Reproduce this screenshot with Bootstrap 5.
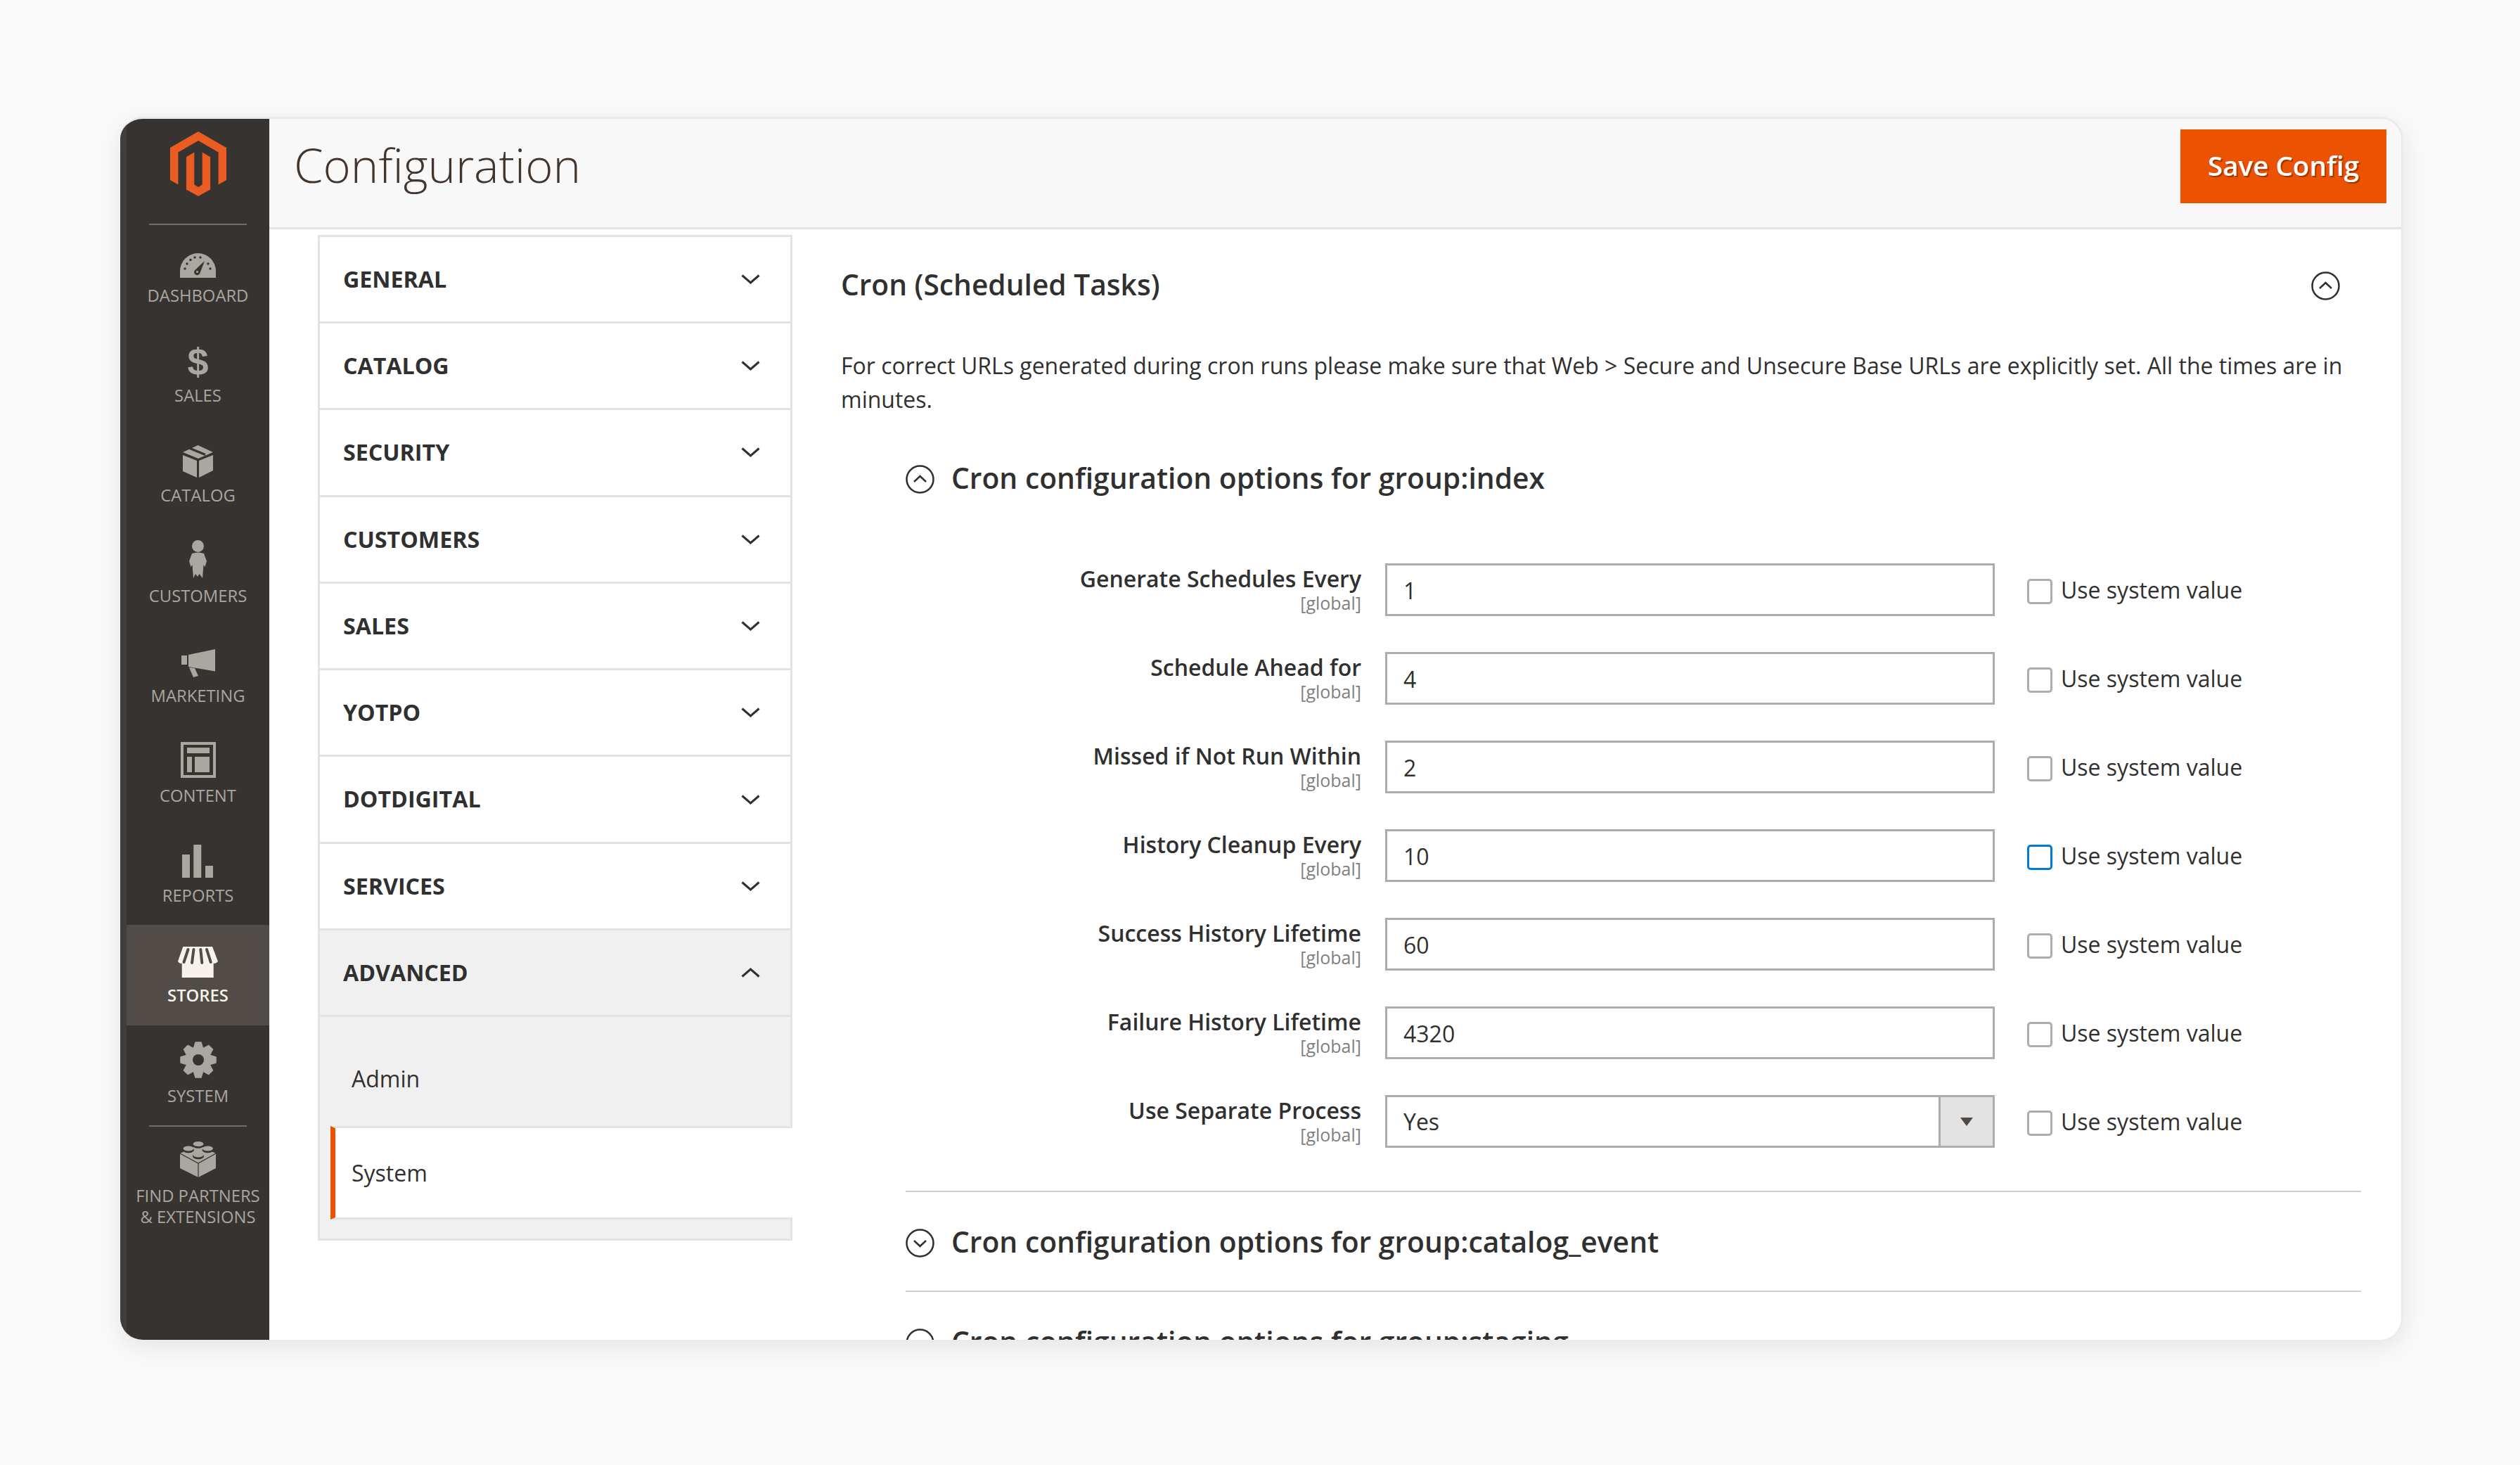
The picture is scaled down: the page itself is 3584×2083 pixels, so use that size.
<!DOCTYPE html>
<html lang="en"><head><meta charset="utf-8"><title>Configuration</title>
<link href="https://cdn.jsdelivr.net/npm/bootstrap@5.3.0/dist/css/bootstrap.min.css" rel="stylesheet">
<style>
html,body{height:100%}
body{background:#fafafa;overflow:hidden;font-family:"Open Sans",sans-serif;font-size:32px;color:#41362f}
.app-window{margin:166px 0 0 171px;width:3247px;height:1739px;border-radius:32px;overflow:hidden;background:#fff;box-shadow:0 10px 36px rgba(0,0,0,.09);border-top:3px solid #ebebeb;border-right:3px solid #ebebeb}
.side-bar{width:212px;flex:none;background:#373330;border-left:9px solid #3e3e3e;margin-top:-3px;padding-top:3px}
.logo-box{height:149px;padding-top:18px}
.side-sep{height:2px;background:#736d66;margin:0 32px}
.menu-entry{height:142.2px;color:#aaa6a0;text-align:center;font-size:23.8px;line-height:30px;text-transform:uppercase}
.menu-entry.is-on{background:#514c47;color:#f7f3eb;font-weight:600}
.menu-ico{height:75px}
.menu-ico svg{fill:currentColor;display:block}
.menu-txt{margin-top:10px}
.menu-lego .menu-ico{height:72px}
.menu-lego .menu-txt{margin-top:11px}
.dollar{font:700 54px/46px "Liberation Sans",sans-serif;margin-bottom:0}
.top-bar{height:157px;flex:none;background:#f8f8f8;border-bottom:3px solid #e3e3e3;padding:14px 21px 0 35px}
.page-name{font-size:67px;font-weight:300;line-height:1;margin:0 0 37px;color:#41362f}
.save-btn{width:293px;height:105px;background:#eb5202;border:0;border-radius:0;color:#fff;font-size:38.6px;font-weight:600;text-shadow:2px 2px 1px rgba(0,0,0,.35);margin-bottom:34px}
.nav-col{width:675px;flex:none;margin:8px 0 0 69px}
.tab-row{height:123.3px;background:#fff;border:solid #e3e3e3;border-width:0 3px 3px;padding:0 43px 0 33px;font-weight:700;font-size:32.2px;text-transform:uppercase;color:#303030}
.tab-row:first-child{height:126px;border-top:3px solid #e3e3e3}
.tab-row.is-open{background:#f0f0f0}
.sub-wrap{background:#f0f0f0;border:solid #e3e3e3;border-width:0 3px 3px;height:318px}
.sub-row{color:#303030;font-size:32px}
.sub-admin{height:155px;padding:66px 0 0 45px;line-height:44px}
.sub-sys{height:133px;margin:0 -3px 0 15px;background:#fff;border-left:7px solid #eb5202;border-top:3px solid #e3e3e3;border-bottom:3px solid #e3e3e3;padding-left:23px}
.main-col{padding:0 57px 0 69px;overflow:hidden}
.sec-head{height:157px}
.sec-name{font-size:40.7px;font-weight:600;margin:0;color:#303030}
.sec-fold{margin:4px 30px 0 0}
.sec-note{line-height:48px;margin:13px 0 47px;font-size:32px;color:#303030}
.grp-wrap{margin-left:92px}
.grp-head{height:80px;gap:24px}
.grp-ring{margin-top:4px;flex:none}
.grp-name{font-size:40.8px;font-weight:600;margin:0;color:#303030;white-space:nowrap}
.field-list{margin-top:82px;gap:51px}
.field-row{height:75px}
.field-lab{width:648px;flex:none;text-align:right;font-weight:600;line-height:44px;color:#303030;margin-top:-6px}
.field-lab small{display:block;font-size:25px;font-weight:400;color:#808080;line-height:28px;margin-top:-2px}
.field-box{width:867px;flex:none;margin-left:34px}
.field-box .form-control,.field-box .form-select{height:75px;border:3px solid #adadad;border-radius:0;font-size:32px;color:#303030;padding:1px 23px 0;background-image:none;box-shadow:none;line-height:1.4}
.sel-cap{width:80px;height:75px;flex:none;background:#e3e3e3;border:3px solid #adadad;border-left-width:3px;margin-left:-3px}
.sel-tri{width:0;height:0;border-left:9px solid transparent;border-right:9px solid transparent;border-top:12px solid #514943}
.use-sys{margin:2px 0 0 46px;padding:0;min-height:0;gap:12px;white-space:nowrap;color:#303030}
.use-sys .form-check-input{width:36px;height:36px;float:none;margin:2px 0 0;border:3px solid #adadad;border-radius:5px;box-shadow:none}
.use-sys .form-check-input.is-hot{border-color:#007bdb}
.use-sys .form-check-label{line-height:44px;margin-top:-2px}
.grp-line{height:2px;background:#cfcfcf;margin-top:61px}
.grp-alt{height:80px;gap:24px;margin-top:30px;margin-bottom:30px}
.grp-alt + .grp-line{margin-top:0}
</style></head><body>
<div class="app-window d-flex">
<aside class="side-bar d-flex flex-column">
 <div class="logo-box d-flex justify-content-center">
  <svg width="80" height="92" viewBox="0 0 80 92"><path fill="#eb5c22" d="M40 0 80 23V69L68.6 75.6V29.6L40 13.1 11.4 29.6V75.6L0 69V23ZM22.9 36.2 34.3 29.6V75.6L40 79 45.7 75.6V29.6L57.1 36.2V82.4L40 92 22.9 82.4Z"/></svg>
 </div>
 <div class="side-sep"></div>
 <div class="menu-entry"><div class="menu-ico d-flex justify-content-center align-items-end">
  <svg width="51" height="35" viewBox="0 0 51 35"><path d="M0 35V25.500A25.500 25.500 0 0 1 51 25.500V35Z"/><g fill="#373330"><circle cx="7" cy="22" r="1.700"/><circle cx="10" cy="15" r="1.700"/><circle cx="15" cy="9.500" r="1.700"/><circle cx="21" cy="6" r="1.700"/><circle cx="29" cy="6" r="1.700"/><circle cx="40" cy="15" r="1.700"/><circle cx="43" cy="22" r="1.700"/><path d="M35 11 28.500 28A4.300 4.300 0 1 1 20.800 24.500Z"/></g><circle cx="24.500" cy="26.500" r="1.600"/></svg></div><div class="menu-txt">Dashboard</div></div>
 <div class="menu-entry"><div class="menu-ico d-flex justify-content-center align-items-end"><span class="dollar">$</span></div><div class="menu-txt">Sales</div></div>
 <div class="menu-entry"><div class="menu-ico d-flex justify-content-center align-items-end">
  <svg width="43" height="46" viewBox="0 0 43 46"><path d="M21.5 0 43 10 22 19 0 10Z"/><path d="M0 14 20 22V46L0 37ZM23 22 43 14V36L23 46Z"/><path d="M10 4.5 32 13.5" stroke="#373330" stroke-width="3.5"/></svg></div><div class="menu-txt">Catalog</div></div>
 <div class="menu-entry"><div class="menu-ico d-flex justify-content-center align-items-end">
  <svg width="25" height="54" viewBox="0 0 25 54"><ellipse cx="12.5" cy="8.5" rx="8.5" ry="8.5"/><path d="M4 19Q12.500 16 21 19L25 30 22.500 38 20.500 35 19 54 14.500 48 12 52 9 48 6 54 4.500 35 2.500 38 0 30Z"/></svg></div><div class="menu-txt">Customers</div></div>
 <div class="menu-entry"><div class="menu-ico d-flex justify-content-center align-items-end">
  <svg width="48" height="41" viewBox="0 0 48 41"><path d="M10 8 48 0V31.500L10 25ZM0 9H8V22H0ZM11 26 19 27 24 38 17 40Z"/></svg></div><div class="menu-txt">Marketing</div></div>
 <div class="menu-entry"><div class="menu-ico d-flex justify-content-center align-items-end">
  <svg width="50" height="51" viewBox="0 0 50 51"><path fill-rule="evenodd" d="M0 0H50V51H0ZM4 4V47H46V4Z"/><path d="M9 8H41V16H9ZM9 21H16V43H9ZM20 21H41V43H20Z"/></svg></div><div class="menu-txt">Content</div></div>
 <div class="menu-entry"><div class="menu-ico d-flex justify-content-center align-items-end">
  <svg width="45" height="47" viewBox="0 0 45 47"><path d="M0 14H11V47H0ZM16.300 0H27.300V47H16.300ZM33 30H44V47H33Z"/></svg></div><div class="menu-txt">Reports</div></div>
 <div class="menu-entry is-on"><div class="menu-ico d-flex justify-content-center align-items-end">
  <svg width="57" height="44" viewBox="0 0 57 44"><path d="M7.300 0H49L57 21Q53.500 25 50.700 23.500V44H5.700V23.500Q3 25 0 21Z"/><path d="M14.500 4 8.500 22M22.500 4 20 23M32.300 4 34.300 23M41 4 46.700 22" stroke="#514c47" stroke-width="4" stroke-linecap="round" fill="none"/></svg></div><div class="menu-txt">Stores</div></div>
 <div class="menu-entry"><div class="menu-ico d-flex justify-content-center align-items-end">
  <svg width="52" height="52" viewBox="0 0 52 52"><g stroke="currentColor" stroke-width="1.500" stroke-linejoin="round"><path d="M22 1h8l3 10H19z"/><path transform="rotate(45 26 26)" d="M22 1h8l3 10H19z"/><path transform="rotate(90 26 26)" d="M22 1h8l3 10H19z"/><path transform="rotate(135 26 26)" d="M22 1h8l3 10H19z"/><path transform="rotate(180 26 26)" d="M22 1h8l3 10H19z"/><path transform="rotate(225 26 26)" d="M22 1h8l3 10H19z"/><path transform="rotate(270 26 26)" d="M22 1h8l3 10H19z"/><path transform="rotate(315 26 26)" d="M22 1h8l3 10H19z"/></g><circle cx="26" cy="26" r="18"/><circle cx="26" cy="26" r="8" fill="#373330"/></svg></div><div class="menu-txt">System</div></div>
 <div class="side-sep"></div>
 <div class="menu-entry menu-lego"><div class="menu-ico d-flex justify-content-center align-items-end">
  <svg width="51" height="51" viewBox="0 0 51 51"><path d="M0 17 26 5 51 17V38L26 51 0 38Z"/><path d="M0 17 26 31 51 17M26 31V51" fill="none" stroke="#373330" stroke-width="1.200"/><g fill="#373330"><ellipse cx="26" cy="5.500" rx="8" ry="4.200"/><ellipse cx="12" cy="12" rx="8" ry="4.200"/><ellipse cx="39.500" cy="12" rx="8" ry="4.200"/><ellipse cx="26" cy="21" rx="8" ry="4.200"/></g><ellipse cx="26" cy="3.500" rx="7.500" ry="3.500"/><ellipse cx="12" cy="10" rx="7.500" ry="3.500"/><ellipse cx="39.500" cy="10" rx="7.500" ry="3.500"/><ellipse cx="26" cy="19" rx="7.500" ry="3.500"/></svg></div><div class="menu-txt">Find Partners<br>&amp; Extensions</div></div>
</aside>
<div class="flex-grow-1 d-flex flex-column" style="min-width:0">
 <header class="top-bar d-flex justify-content-between align-items-center">
  <h1 class="page-name">Configuration</h1>
  <button type="button" class="btn save-btn">Save Config</button>
 </header>
 <div class="d-flex flex-grow-1" style="min-height:0">
  <nav class="nav-col">
   <div class="tab-row d-flex justify-content-between align-items-center">General<svg width="27" height="14" viewBox="0 0 27 14"><path d="M1.500 1.500 13.500 12 25.500 1.500" fill="none" stroke="#303030" stroke-width="3"/></svg></div>
   <div class="tab-row d-flex justify-content-between align-items-center">Catalog<svg width="27" height="14" viewBox="0 0 27 14"><path d="M1.500 1.500 13.500 12 25.500 1.500" fill="none" stroke="#303030" stroke-width="3"/></svg></div>
   <div class="tab-row d-flex justify-content-between align-items-center">Security<svg width="27" height="14" viewBox="0 0 27 14"><path d="M1.500 1.500 13.500 12 25.500 1.500" fill="none" stroke="#303030" stroke-width="3"/></svg></div>
   <div class="tab-row d-flex justify-content-between align-items-center">Customers<svg width="27" height="14" viewBox="0 0 27 14"><path d="M1.500 1.500 13.500 12 25.500 1.500" fill="none" stroke="#303030" stroke-width="3"/></svg></div>
   <div class="tab-row d-flex justify-content-between align-items-center">Sales<svg width="27" height="14" viewBox="0 0 27 14"><path d="M1.500 1.500 13.500 12 25.500 1.500" fill="none" stroke="#303030" stroke-width="3"/></svg></div>
   <div class="tab-row d-flex justify-content-between align-items-center">Yotpo<svg width="27" height="14" viewBox="0 0 27 14"><path d="M1.500 1.500 13.500 12 25.500 1.500" fill="none" stroke="#303030" stroke-width="3"/></svg></div>
   <div class="tab-row d-flex justify-content-between align-items-center">Dotdigital<svg width="27" height="14" viewBox="0 0 27 14"><path d="M1.500 1.500 13.500 12 25.500 1.500" fill="none" stroke="#303030" stroke-width="3"/></svg></div>
   <div class="tab-row d-flex justify-content-between align-items-center">Services<svg width="27" height="14" viewBox="0 0 27 14"><path d="M1.500 1.500 13.500 12 25.500 1.500" fill="none" stroke="#303030" stroke-width="3"/></svg></div>
   <div class="tab-row is-open d-flex justify-content-between align-items-center">Advanced<svg width="27" height="14" viewBox="0 0 27 14"><path d="M1.500 12.500 13.500 2 25.500 12.500" fill="none" stroke="#303030" stroke-width="3"/></svg></div>
   <div class="sub-wrap">
    <div class="sub-row sub-admin">Admin</div>
    <div class="sub-row sub-sys d-flex align-items-center">System</div>
   </div>
  </nav>
  <main class="main-col flex-grow-1">
   <div class="sec-head d-flex justify-content-between align-items-center">
    <h2 class="sec-name">Cron (Scheduled Tasks)</h2>
    <svg class="sec-fold" width="41" height="41" viewBox="0 0 41 41"><circle cx="20.500" cy="20.500" r="19" fill="none" stroke="#303030" stroke-width="2.500"/><path d="M12 24 20.500 16 29 24" fill="none" stroke="#303030" stroke-width="2.500"/></svg>
   </div>
   <p class="sec-note">For correct URLs generated during cron runs please make sure that Web &gt; Secure and Unsecure Base URLs are explicitly set. All the times are in minutes.</p>
   <div class="grp-wrap">
    <div class="grp-head d-flex align-items-center">
     <svg class="grp-ring" width="41" height="41" viewBox="0 0 41 41"><circle cx="20.500" cy="20.500" r="19" fill="none" stroke="#303030" stroke-width="2.500"/><path d="M12 24 20.500 16 29 24" fill="none" stroke="#303030" stroke-width="2.500"/></svg>
     <h3 class="grp-name">Cron configuration options for group:index</h3>
    </div>
    <div class="field-list d-flex flex-column">
     <div class="field-row d-flex align-items-center"><label class="field-lab">Generate Schedules Every<small>[global]</small></label><div class="field-box"><input class="form-control" value="1"></div><div class="use-sys form-check d-flex align-items-center"><input class="form-check-input" type="checkbox"><label class="form-check-label">Use system value</label></div></div>
     <div class="field-row d-flex align-items-center"><label class="field-lab">Schedule Ahead for<small>[global]</small></label><div class="field-box"><input class="form-control" value="4"></div><div class="use-sys form-check d-flex align-items-center"><input class="form-check-input" type="checkbox"><label class="form-check-label">Use system value</label></div></div>
     <div class="field-row d-flex align-items-center"><label class="field-lab">Missed if Not Run Within<small>[global]</small></label><div class="field-box"><input class="form-control" value="2"></div><div class="use-sys form-check d-flex align-items-center"><input class="form-check-input" type="checkbox"><label class="form-check-label">Use system value</label></div></div>
     <div class="field-row d-flex align-items-center"><label class="field-lab">History Cleanup Every<small>[global]</small></label><div class="field-box"><input class="form-control" value="10"></div><div class="use-sys form-check d-flex align-items-center"><input class="form-check-input is-hot" type="checkbox"><label class="form-check-label">Use system value</label></div></div>
     <div class="field-row d-flex align-items-center"><label class="field-lab">Success History Lifetime<small>[global]</small></label><div class="field-box"><input class="form-control" value="60"></div><div class="use-sys form-check d-flex align-items-center"><input class="form-check-input" type="checkbox"><label class="form-check-label">Use system value</label></div></div>
     <div class="field-row d-flex align-items-center"><label class="field-lab">Failure History Lifetime<small>[global]</small></label><div class="field-box"><input class="form-control" value="4320"></div><div class="use-sys form-check d-flex align-items-center"><input class="form-check-input" type="checkbox"><label class="form-check-label">Use system value</label></div></div>
     <div class="field-row d-flex align-items-center"><label class="field-lab">Use Separate Process<small>[global]</small></label><div class="field-box d-flex"><select class="form-select"><option>Yes</option><option>No</option></select><span class="sel-cap d-flex align-items-center justify-content-center"><span class="sel-tri"></span></span></div><div class="use-sys form-check d-flex align-items-center"><input class="form-check-input" type="checkbox"><label class="form-check-label">Use system value</label></div></div>
    </div>
    <div class="grp-line"></div>
    <div class="grp-alt d-flex align-items-center">
     <svg class="grp-ring" width="41" height="41" viewBox="0 0 41 41"><circle cx="20.500" cy="20.500" r="19" fill="none" stroke="#303030" stroke-width="2.500"/><path d="M12 17 20.500 25 29 17" fill="none" stroke="#303030" stroke-width="2.500"/></svg>
     <h3 class="grp-name">Cron configuration options for group:catalog_event</h3>
    </div>
    <div class="grp-line"></div>
    <div class="grp-alt d-flex align-items-center">
     <svg class="grp-ring" width="41" height="41" viewBox="0 0 41 41"><circle cx="20.500" cy="20.500" r="19" fill="none" stroke="#303030" stroke-width="2.500"/><path d="M12 17 20.500 25 29 17" fill="none" stroke="#303030" stroke-width="2.500"/></svg>
     <h3 class="grp-name">Cron configuration options for group:staging</h3>
    </div>
   </div>
  </main>
 </div>
</div>
</div>
<script src="https://cdn.jsdelivr.net/npm/bootstrap@5.3.0/dist/js/bootstrap.bundle.min.js"></script>
</body></html>
